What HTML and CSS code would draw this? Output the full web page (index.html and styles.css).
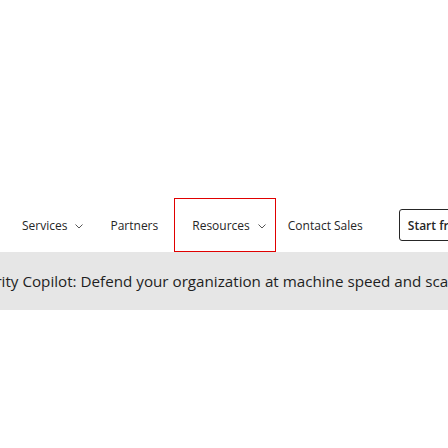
FILE: index.html
```html
<!DOCTYPE html>
<html>
<head>
<meta charset="utf-8">
<link rel="stylesheet" href="styles.css">
</head>
<body>
<header class="header">
  <nav class="nav">
    <a class="item item-services">Services <span class="chev"><svg width="8" height="5" viewBox="0 0 8 5"><path d="M0.5 0.5 L4 4 L7.5 0.5" fill="none" stroke="#555" stroke-width="1"/></svg></span></a>
    <a class="item item-partners">Partners</a>
    <a class="item item-resources">Resources <span class="chev"><svg width="8" height="5" viewBox="0 0 8 5"><path d="M0.5 0.5 L4 4 L7.5 0.5" fill="none" stroke="#555" stroke-width="1"/></svg></span></a>
    <a class="item item-contact">Contact Sales</a>
    <a class="btn">Start free trial</a>
  </nav>
</header>
<div class="banner">
  <p class="banner-text">Microsoft Security Copilot: Defend your organization at machine speed and scale</p>
</div>
</body>
</html>
```
FILE: styles.css
```css
html, body {
  margin: 0;
  padding: 0;
  background: #fff;
  overflow: hidden;
  width: 448px;
  height: 448px;
}
body {
  font-family: "Open Sans", "Noto Sans", sans-serif;
  color: #262626;
}
.header {
  padding-top: 198px;
}
.nav {
  display: flex;
  align-items: center;
  height: 54px;
  padding-left: 22px;
  white-space: nowrap;
}
.item {
  font-size: 12px;
  color: #262626;
  display: flex;
  align-items: center;
}
.chev {
  display: inline-flex;
  margin-left: 8px;
  margin-top: 3px;
}
.item-services {
  margin-right: 27px;
}
.item-partners {
  margin-right: 16px;
}
.item-resources {
  box-sizing: border-box;
  height: 54px;
  border: 1px solid #e00000;
  padding: 0 9px 0 17px;
  margin-right: 12px;
}
.item-contact {
  margin-right: 36px;
}
.btn {
  box-sizing: border-box;
  height: 32px;
  border: 1px solid #262626;
  border-radius: 3px;
  padding: 0 8px;
  display: flex;
  align-items: center;
  font-size: 12px;
  font-weight: 600;
  color: #262626;
  flex-shrink: 0;
}
.banner {
  background: #e6e6e6;
  height: 58px;
  display: flex;
  align-items: center;
  overflow: hidden;
}
.banner-text {
  margin: 0 0 0 -109px;
  font-size: 15.2px;
  white-space: nowrap;
  color: #1f1f1f;
}
```
